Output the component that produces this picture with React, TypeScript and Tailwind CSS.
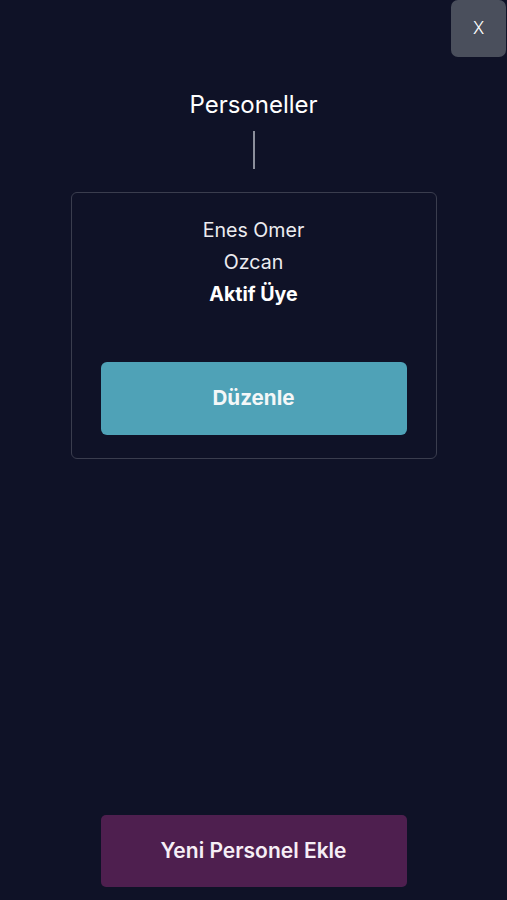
import React from 'react';

interface Staff {
  id: number;
  firstName: string;
  lastName: string;
  status: string;
}

const staffList: Staff[] = [
  { id: 1, firstName: 'Enes Omer', lastName: 'Ozcan', status: 'Aktif Üye' },
];

function App() {
  return (
    <div
      className="w-full h-[900px] bg-[#0f1227] flex flex-col items-center text-white"
      style={{ fontFamily: 'Inter, "Noto Sans", sans-serif' }}
    >
      {/* top bar with close button */}
      <div className="w-full flex justify-end pr-[1px]">
        <button className="w-[55px] h-[57px] rounded-[7px] bg-[#4a4f5c] text-[17px] font-light text-white flex items-center justify-center">
          X
        </button>
      </div>

      <h1 className="mt-[32px] text-[24px] leading-[32px] font-normal text-white">Personeller</h1>
      <div className="mt-[10px] w-[2px] h-[38px] bg-[#8b8e9b]" />

      {staffList.map((staff) => (
        <div
          key={staff.id}
          className="mt-[23px] w-[366px] border border-[#3a3d4e] rounded-[6px] px-[29px] pt-[21px] pb-[23px] flex flex-col items-center"
        >
          <p className="text-[19.6px] leading-[32px] text-[#ececf0]">{staff.firstName}</p>
          <p className="text-[19.6px] leading-[32px] text-[#ececf0]">{staff.lastName}</p>
          <p className="text-[19.6px] leading-[32px] font-bold text-white">{staff.status}</p>
          <button className="mt-[52px] w-full h-[73px] rounded-[6px] bg-[#4fa2b7] text-[20.6px] font-bold text-[#f4f7f8]">
            Düzenle
          </button>
        </div>
      ))}

      <button className="mt-auto mb-[13px] w-[306px] h-[72px] rounded-[5px] bg-[#4e1f4f] text-[21px] font-semibold text-[#f6eef6]">
        Yeni Personel Ekle
      </button>
    </div>
  );
}

export default App;
